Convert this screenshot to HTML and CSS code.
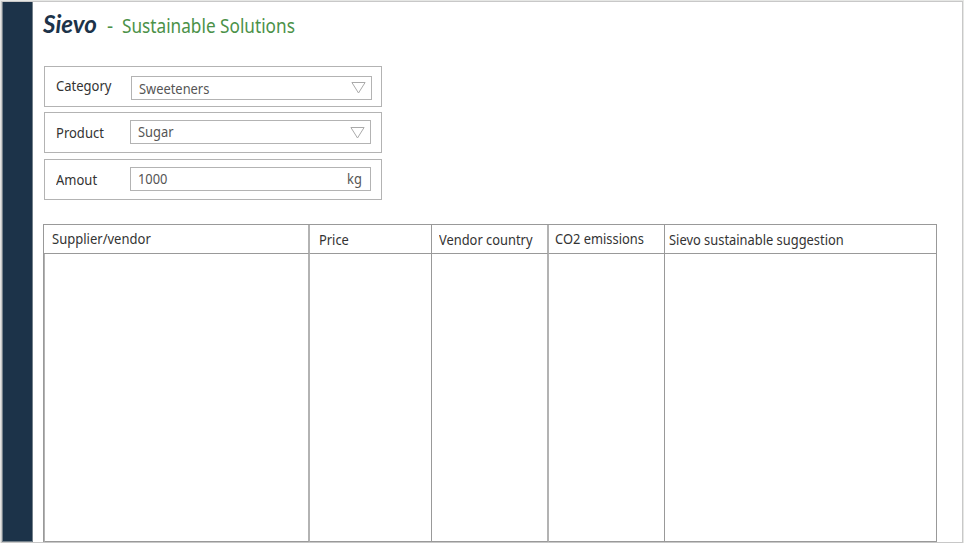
FILE: index.html
```html
<!DOCTYPE html>
<html lang="en">
<head>
<meta charset="utf-8">
<title>Sievo - Sustainable Solutions</title>
<link rel="stylesheet" href="styles.css">
</head>
<body>
<div class="window">
  <aside class="sidebar"></aside>
  <main class="content">
    <header class="header">
      <svg class="logo" width="56" height="26" viewBox="0 0 56 26" role="img" aria-label="Sievo"><text x="0" y="21" textLength="54" lengthAdjust="spacingAndGlyphs">Sievo</text></svg>
      <span class="dash">-</span>
      <h1 class="title"><span class="t">Sustainable Solutions</span></h1>
    </header>
    <form class="filters">
      <div class="field field-category">
        <span class="label"><span class="t">Category</span></span>
        <div class="control"><span class="t">Sweeteners</span><svg class="arrow" width="15" height="12" viewBox="0 0 15 12"><path d="M.9.5H14.1L7.5 11Z"/></svg></div>
      </div>
      <div class="field field-product">
        <span class="label"><span class="t">Product</span></span>
        <div class="control"><span class="t">Sugar</span><svg class="arrow" width="15" height="12" viewBox="0 0 15 12"><path d="M.9.5H14.1L7.5 11Z"/></svg></div>
      </div>
      <div class="field field-amount">
        <span class="label"><span class="t">Amout</span></span>
        <div class="control"><span class="t">1000</span><span class="unit"><span class="t">kg</span></span></div>
      </div>
    </form>
    <section class="table">
      <div class="cell head supplier"><span class="t">Supplier/vendor</span></div>
      <div class="cell head price"><span class="t">Price</span></div>
      <div class="cell head country"><span class="t">Vendor country</span></div>
      <div class="cell head emissions"><span class="t">CO2 emissions</span></div>
      <div class="cell head suggestion"><span class="t">Sievo sustainable suggestion</span></div>
      <div class="cell supplier body-first"></div>
      <div class="cell price"></div>
      <div class="cell country"></div>
      <div class="cell emissions"></div>
      <div class="cell suggestion"></div>
    </section>
  </main>
</div>
</body>
</html>
```
FILE: styles.css
```css
* { box-sizing: border-box; }
body {
  margin: 0;
  height: 543px;
  overflow: hidden;
  background: #e6e7e5;
  font-family: "Noto Sans", sans-serif;
  font-size: 14px;
  line-height: 20px;
  color: #333;
}
.window {
  display: flex;
  width: 962px;
  height: 542px;
  margin: 1px 0 0 1px;
  border: 1px solid #c8c8c8;
  background: #fff;
}
.sidebar {
  flex: none;
  width: 31px;
  background: #1c3349;
  border: 1px solid #74818b;
  border-top: 0;
}
.content { width: 904px; padding-left: 10px; }
.t { display: inline-block; white-space: nowrap; transform: scaleX(.92); transform-origin: 0 50%; }
.header { display: flex; height: 64px; padding-top: 10px; color: #4b9148; font-size: 19px; line-height: 28px; }
.logo { flex: none; overflow: visible; }
.logo text { font: italic 700 25px Lato, sans-serif; fill: #1c3349; }
.dash { width: 15px; margin-left: 8px; }
.title { margin: 0; font-size: 19px; font-weight: 400; }
.title .t { transform: scaleX(.905); }
.filters { display: grid; grid-template-rows: 41px 41px 41px; row-gap: 5px; width: 338px; margin-left: 1px; }
.field { display: flex; border: 1px solid #b3b3b3; }
.field-amount { margin-top: 1px; margin-bottom: -1px; }
.label { width: 85px; padding: 10px 0 0 10.5px; }
.label .t { transform: scaleX(.93); }
.control { display: flex; justify-content: space-between; width: 241px; height: 24px; margin-top: 7px; padding: 1px 5px 0 7px; border: 1px solid #b3b3b3; color: #555; line-height: 19px; }
.field-category .label { width: 86px; padding-top: 9px; }
.field-category .control { margin-top: 9px; padding-top: 2px; }
.arrow { margin-top: 5px; fill: none; stroke: #aaa; stroke-width: 1; }
.field-category .arrow { margin-top: 3px; }
.unit { margin-right: 2px; }
.table {
  display: grid;
  grid-template-columns: 266px 122px 117px 116px 272px;
  grid-template-rows: 29px 288px;
  width: 894px;
  margin-top: 25px;
  border-top: 1px solid #999;
  border-left: 1px solid #999;
}
.cell { border-right: 1px solid #999; border-bottom: 1px solid #999; }
.head { padding: 5px 0 0 8px; }
.head.price { padding-left: 9px; }
.head.supplier, .head.emissions { padding-top: 4px; }
.head.supplier .t { transform: scaleX(.93); }
.head.country { padding-left: 7px; }
.head.emissions { padding-left: 6px; }
.head.suggestion { padding-left: 4px; }
.supplier, .country { border-right: 2px solid #b3b3b3; }
.body-first { border-left: 1px solid #b3b3b3; }
```
